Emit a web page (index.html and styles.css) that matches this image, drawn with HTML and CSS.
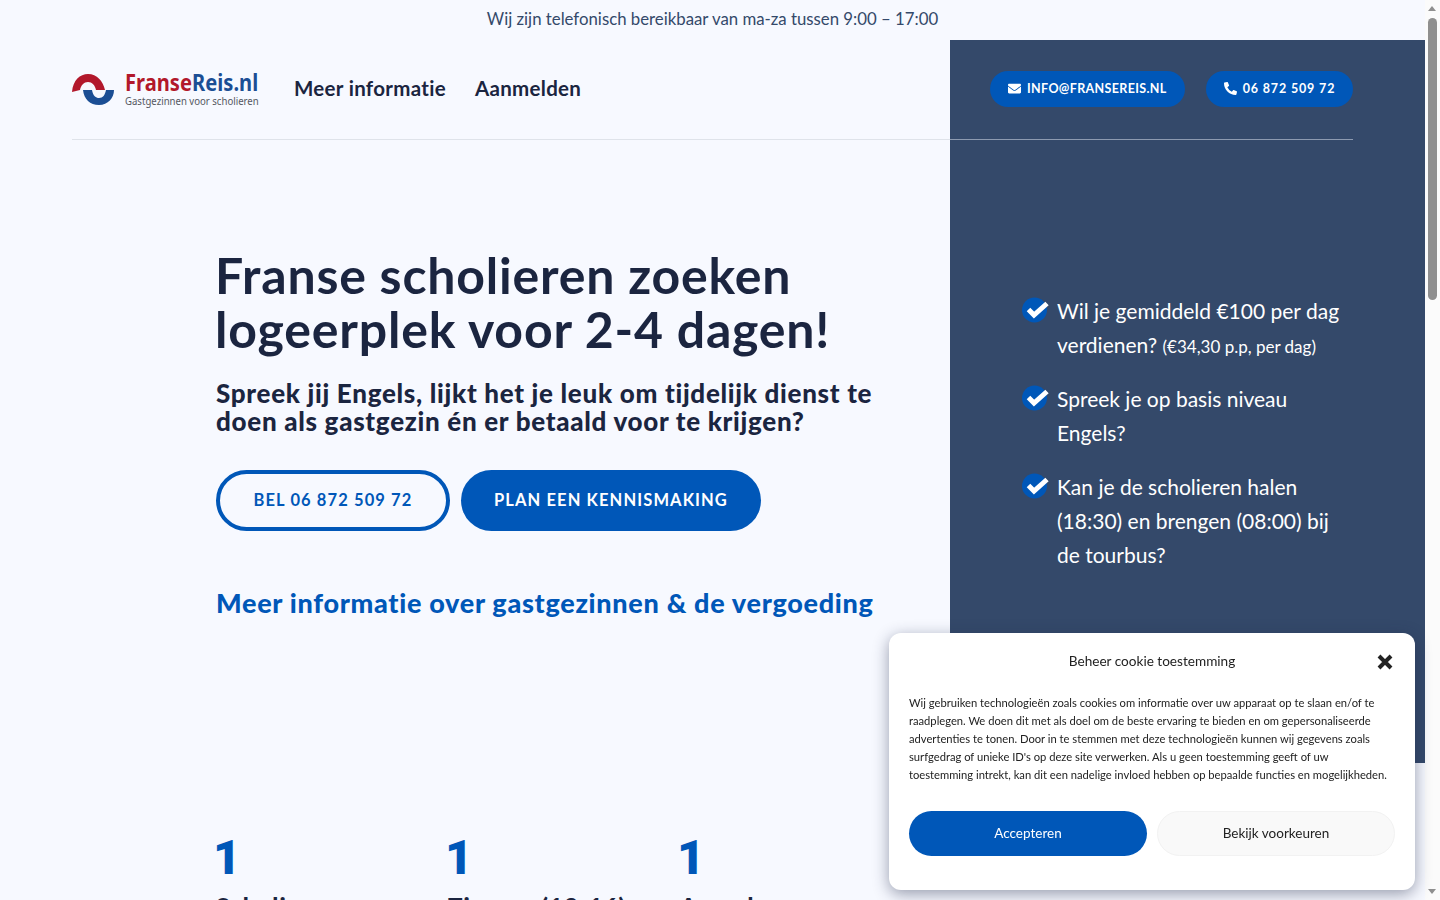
FILE: index.html
```html
<!DOCTYPE html>
<html lang="nl">
<head>
    <meta charset="UTF-8">
    <meta name="viewport" content="width=device-width, initial-scale=1.0">
    <title>FranseReis.nl - Gastgezinnen voor scholieren</title>
    <link rel="stylesheet" href="styles.css">
</head>
<body>
    <div class="page">
        <div class="topbar">Wij zijn telefonisch bereikbaar van ma-za tussen 9:00 – 17:00</div>

        <div class="hero">
            <div class="hero-left">
                <header class="site-header">
                    <svg class="logo" width="190" height="40" viewBox="0 0 190 40">
                        <path d="M0 22 C1 10 8 4 16 4 C25 4 31 11 33 20 L24 20 C23 15 20 12 16 12 C12 12 9 15 8 20 Z" fill="#b2182b"/>
                        <path d="M11 20 L20 20 C21 26 24 28 27 28 C31 28 33 25 34 20 L42 20 C42 28 36 35 27 35 C18 35 12 29 11 20 Z" fill="#1b4e94"/>
                        <text class="logo-name" transform="translate(53 21) scale(0.84 1)"><tspan fill="#b2182b">Franse</tspan><tspan fill="#1b4e94">Reis.nl</tspan></text>
                        <text class="logo-sub" transform="translate(53 35) scale(0.96 1)">Gastgezinnen voor scholieren</text>
                    </svg>
                    <nav class="main-nav">
                        <a href="#">Meer informatie</a>
                        <a href="#">Aanmelden</a>
                    </nav>
                </header>

                <main class="hero-content">
                    <h1>Franse scholieren zoeken<br>logeerplek voor 2-4 dagen!</h1>
                    <h2>Spreek jij Engels, lijkt het je leuk om tijdelijk dienst te<br>doen als gastgezin én er betaald voor te krijgen?</h2>
                    <div class="hero-buttons">
                        <a class="btn btn-outline" href="#">BEL 06 872 509 72</a>
                        <a class="btn btn-solid" href="#">PLAN EEN KENNISMAKING</a>
                    </div>
                    <a class="more-link" href="#">Meer informatie over gastgezinnen &amp; de vergoeding</a>
                </main>
            </div>

            <aside class="hero-right">
                <div class="contact-bar">
                    <a class="pill" href="#">
                        <svg width="13" height="13" viewBox="0 0 512 512"><path fill="#fff" d="M502.3 190.8c3.9-3.1 9.7-.2 9.7 4.7V400c0 26.5-21.5 48-48 48H48c-26.5 0-48-21.5-48-48V195.6c0-5 5.7-7.8 9.7-4.7 22.4 17.4 52.1 39.5 154.1 113.6 21.1 15.4 56.7 47.8 92.2 47.6 35.7.3 72-32.8 92.3-47.6 102-74.1 131.6-96.3 154-113.7zM256 320c23.2.4 56.6-29.2 73.4-41.4 132.7-96.3 142.8-104.7 173.4-128.7 5.8-4.5 9.2-11.5 9.2-18.9v-19c0-26.5-21.5-48-48-48H48C21.5 64 0 85.5 0 112v19c0 7.4 3.4 14.3 9.2 18.9 30.6 23.9 40.7 32.4 173.4 128.7 16.8 12.2 50.2 41.8 73.4 41.4z"/></svg>
                        INFO@FRANSEREIS.NL
                    </a>
                    <a class="pill pill-phone" href="#">
                        <svg width="13" height="13" viewBox="0 0 512 512"><path fill="#fff" d="M497.39 361.8l-112-48a24 24 0 0 0-28 6.9l-49.6 60.6A370.66 370.66 0 0 1 130.6 204.11l60.6-49.6a23.94 23.94 0 0 0 6.9-28l-48-112A24.16 24.16 0 0 0 122.6.61l-104 24A24 24 0 0 0 0 48c0 256.5 207.9 464 464 464a24 24 0 0 0 23.4-18.6l24-104a24.29 24.29 0 0 0-14.01-27.6z"/></svg>
                        06 872 509 72
                    </a>
                </div>
                <ul class="checklist">
                    <li>
                        <svg class="check" width="28" height="26" viewBox="0 0 28 26"><circle cx="12.5" cy="13" r="12.5" fill="#0057b8"/><path d="M6.5 12.5 L12 18 L25 6.5" fill="none" stroke="#fff" stroke-width="5"/></svg>
                        <span>Wil je gemiddeld €100 per dag verdienen? <small>(€34,30 p.p, per dag)</small></span>
                    </li>
                    <li>
                        <svg class="check" width="28" height="26" viewBox="0 0 28 26"><circle cx="12.5" cy="13" r="12.5" fill="#0057b8"/><path d="M6.5 12.5 L12 18 L25 6.5" fill="none" stroke="#fff" stroke-width="5"/></svg>
                        <span>Spreek je op basis niveau Engels?</span>
                    </li>
                    <li>
                        <svg class="check" width="28" height="26" viewBox="0 0 28 26"><circle cx="12.5" cy="13" r="12.5" fill="#0057b8"/><path d="M6.5 12.5 L12 18 L25 6.5" fill="none" stroke="#fff" stroke-width="5"/></svg>
                        <span>Kan je de scholieren halen (18:30) en brengen (08:00) bij de tourbus?</span>
                    </li>
                </ul>
            </aside>
        </div>

        <section class="stats">
            <div class="stat"><div class="stat-num">1</div><div class="stat-label">Scholieren</div></div>
            <div class="stat"><div class="stat-num">1</div><div class="stat-label">Tieners (13-16)</div></div>
            <div class="stat"><div class="stat-num">1</div><div class="stat-label">Avond</div></div>
        </section>
    </div>

    <div class="scrollbar">
        <div class="arrow-up"></div>
        <div class="thumb"></div>
        <div class="arrow-down"></div>
    </div>

    <div class="cookie-box">
        <div class="cookie-title">Beheer cookie toestemming</div>
        <svg class="cookie-close" width="16" height="16" viewBox="0 0 16 16"><path d="M2 2 L14 14 M14 2 L2 14" stroke="#222" stroke-width="4"/></svg>
        <p class="cookie-text">Wij gebruiken technologieën zoals cookies om informatie over uw apparaat op te slaan en/of te raadplegen. We doen dit met als doel om de beste ervaring te bieden en om gepersonaliseerde advertenties te tonen. Door in te stemmen met deze technologieën kunnen wij gegevens zoals surfgedrag of unieke ID's op deze site verwerken. Als u geen toestemming geeft of uw toestemming intrekt, kan dit een nadelige invloed hebben op bepaalde functies en mogelijkheden.</p>
        <div class="cookie-buttons">
            <a class="cookie-btn cookie-accept" href="#">Accepteren</a>
            <a class="cookie-btn cookie-prefs" href="#">Bekijk voorkeuren</a>
        </div>
    </div>
</body>
</html>
```

FILE: styles.css
```css
* {
    box-sizing: border-box;
}

html, body {
    height: 100%;
}

body {
    margin: 0;
    display: flex;
    overflow: hidden;
    background-color: #f7f9ff;
    font-family: 'Lato', 'Noto Sans', sans-serif;
    color: #1b2540;
}

a {
    text-decoration: none;
    color: inherit;
}

.page {
    flex: 1;
    min-width: 0;
}

.topbar {
    height: 40px;
    display: flex;
    align-items: center;
    justify-content: center;
    padding-bottom: 3px;
    font-size: 16.8px;
    color: #34496a;
}

.hero {
    display: flex;
    height: 723px;
}

.hero-left {
    width: 950px;
}

.site-header {
    height: 100px;
    margin-left: 72px;
    display: flex;
    align-items: center;
    gap: 32px;
    border-bottom: 1px solid #dfe3ea;
}

.logo {
    flex-shrink: 0;
}

.logo-name {
    font-family: 'Noto Sans', sans-serif;
    font-size: 24px;
    font-weight: 700;
}

.logo-sub {
    font-family: 'Noto Sans', sans-serif;
    font-size: 10px;
    fill: #55585f;
}

.main-nav {
    display: flex;
    gap: 29px;
    padding-bottom: 3px;
    font-size: 20.5px;
    font-weight: 700;
    letter-spacing: 0.3px;
}

.hero-content {
    padding: 108px 0 0 216px;
}

h1 {
    margin: 0 0 0 -1px;
    font-size: 50px;
    line-height: 54px;
    font-weight: 700;
    letter-spacing: 0.8px;
}

h2 {
    margin: 23px 0 0;
    font-size: 26px;
    line-height: 28px;
    font-weight: 900;
    letter-spacing: 0.7px;
}

.hero-buttons {
    display: flex;
    gap: 11px;
    margin-top: 35px;
}

.btn {
    height: 61px;
    display: flex;
    align-items: center;
    justify-content: center;
    padding-bottom: 2px;
    border-radius: 31px;
    font-size: 16.5px;
    font-weight: 700;
    letter-spacing: 1.1px;
}

.btn-outline {
    width: 234px;
    border: 4px solid #0057b8;
    color: #0057b8;
}

.btn-solid {
    width: 300px;
    background-color: #0057b8;
    color: #fff;
}

.more-link {
    display: block;
    margin-top: 56px;
    font-size: 27px;
    line-height: 32px;
    font-weight: 900;
    letter-spacing: 0.7px;
    color: #0057b8;
}

.hero-right {
    width: 475px;
    background-color: #34496a;
    color: #fff;
}

.contact-bar {
    height: 100px;
    margin-right: 72px;
    padding: 31px 0 0 40px;
    display: flex;
    gap: 21px;
    align-items: flex-start;
    border-bottom: 1px solid #8d9ab0;
}

.pill {
    height: 36px;
    padding: 0 18px 1px;
    display: flex;
    align-items: center;
    gap: 6px;
    border-radius: 18px;
    background-color: #0057b8;
    font-size: 12.5px;
    font-weight: 700;
    letter-spacing: 0.35px;
    white-space: nowrap;
}

.pill-phone {
    letter-spacing: 0.85px;
}

.checklist {
    list-style: none;
    margin: 154px 0 0;
    padding: 0 72px;
    font-size: 21px;
    line-height: 34px;
}

.checklist li {
    display: flex;
    gap: 7px;
    margin-bottom: 20px;
}

.check {
    flex-shrink: 0;
    margin-top: 3px;
}

.checklist small {
    font-size: 17px;
    line-height: 1;
}

.stats {
    display: flex;
    padding: 65px 0 0 216px;
}

.stat {
    width: 232px;
}

.stat-num {
    margin-left: -3px;
    font-family: 'Roboto', sans-serif;
    font-size: 48px;
    line-height: 60px;
    font-weight: 900;
    color: #0057b8;
}

.stat-label {
    margin-top: 4px;
    font-size: 24px;
    font-weight: 900;
    letter-spacing: 1px;
    white-space: nowrap;
}

.scrollbar {
    width: 15px;
    flex-shrink: 0;
    position: relative;
    background-color: #fbfbfb;
}

.thumb {
    position: absolute;
    top: 18px;
    left: 3px;
    width: 9px;
    height: 282px;
    border-radius: 5px;
    background-color: #8f8f8f;
}

.arrow-up, .arrow-down {
    position: absolute;
    left: 3px;
    width: 0;
    height: 0;
    border-left: 4.5px solid transparent;
    border-right: 4.5px solid transparent;
}

.arrow-up {
    top: 6px;
    border-bottom: 5px solid #8f8f8f;
}

.arrow-down {
    bottom: 6px;
    border-top: 5px solid #8f8f8f;
}

.cookie-box {
    position: fixed;
    left: 889px;
    top: 633px;
    width: 526px;
    height: 257px;
    padding: 0 20px;
    border-radius: 12px;
    background-color: #fff;
    box-shadow: 0 4px 16px rgba(30, 40, 70, 0.45);
    color: #222;
}

.cookie-title {
    margin-top: 18px;
    text-align: center;
    font-size: 13.6px;
    line-height: 20px;
}

.cookie-close {
    position: absolute;
    top: 21px;
    right: 22px;
}

.cookie-text {
    margin: 23px 0 0;
    font-size: 11.2px;
    line-height: 18px;
}

.cookie-buttons {
    display: flex;
    gap: 10px;
    margin-top: 27px;
}

.cookie-btn {
    width: 238px;
    height: 45px;
    display: flex;
    align-items: center;
    justify-content: center;
    padding-bottom: 1px;
    border-radius: 23px;
    font-size: 13.5px;
}

.cookie-accept {
    background-color: #0057b8;
    color: #fff;
}

.cookie-prefs {
    background-color: #f9f9f9;
    border: 1px solid #f2f2f2;
    color: #222;
}
```
